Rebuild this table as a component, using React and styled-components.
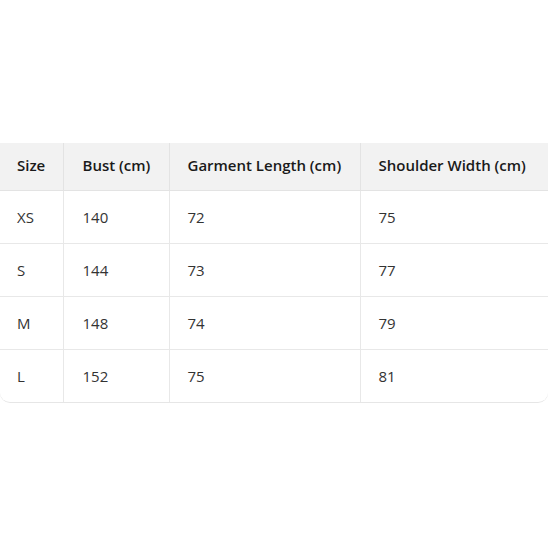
import React from "react";
import styled, { createGlobalStyle } from "styled-components";

const Global = createGlobalStyle`
  html, body { margin: 0; padding: 0; background: #ffffff; }
  body { font-family: "Open Sans", "Noto Sans", sans-serif; }
`;

const Page = styled.div`
  width: 548px;
  height: 548px;
  display: flex;
  flex-direction: column;
  justify-content: flex-start;
  padding-top: 143px;
  box-sizing: border-box;
`;

const Wrap = styled.div`
  width: 548px;
  border-bottom: 1px solid #e6e6e6;
  border-radius: 0 0 10px 10px;
  overflow: hidden;
  box-sizing: border-box;
`;

const Table = styled.table`
  width: 100%;
  border-collapse: collapse;
  table-layout: fixed;
`;

const Th = styled.th`
  width: ${(p) => p.$w}px;
  height: 47px;
  padding: 0 0 3px ${(p) => p.$pl || 18}px;
  text-align: left;
  background: #f2f2f2;
  color: #1a1a1a;
  font-weight: 600;
  font-size: 15px;
  border-left: ${(p) => (p.$first ? "none" : "1px solid #e3e3e3")};
  border-bottom: 1px solid #e3e3e3;
  box-sizing: border-box;
  white-space: nowrap;
`;

const Td = styled.td`
  height: 53px;
  padding: 0 0 0 ${(p) => p.$pl || 18}px;
  color: #333333;
  font-size: 15px;
  font-weight: 400;
  border-left: ${(p) => (p.$first ? "none" : "1px solid #e8e8e8")};
  border-top: ${(p) => (p.$top ? "none" : "1px solid #e8e8e8")};
  box-sizing: border-box;
`;

const cols = [
  { label: "Size", w: 63, pl: 17 },
  { label: "Bust (cm)", w: 106, pl: 19 },
  { label: "Garment Length (cm)", w: 191, pl: 18 },
  { label: "Shoulder Width (cm)", w: 188, pl: 18 },
];

const rows = [
  ["XS", "140", "72", "75"],
  ["S", "144", "73", "77"],
  ["M", "148", "74", "79"],
  ["L", "152", "75", "81"],
];

export default function App() {
  return (
    <>
      <Global />
      <Page>
        <Wrap>
          <Table>
            <thead>
              <tr>
                {cols.map((c, i) => (
                  <Th key={c.label} $w={c.w} $pl={c.pl} $first={i === 0}>
                    {c.label}
                  </Th>
                ))}
              </tr>
            </thead>
            <tbody>
              {rows.map((r, ri) => (
                <tr key={r[0]}>
                  {r.map((v, i) => (
                    <Td key={i} $pl={cols[i].pl} $first={i === 0} $top={ri === 0}>
                      {v}
                    </Td>
                  ))}
                </tr>
              ))}
            </tbody>
          </Table>
        </Wrap>
      </Page>
    </>
  );
}
